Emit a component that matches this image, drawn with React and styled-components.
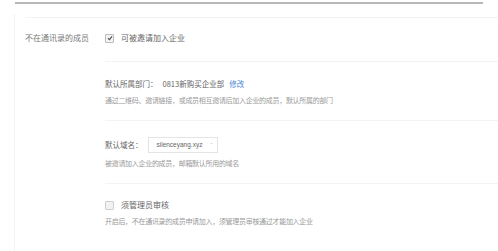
import styled, { createGlobalStyle } from "styled-components";

const GlobalStyle = createGlobalStyle`
  body {
    margin: 0;
    background: #fff;
    font-family: "Noto Sans CJK SC", "Noto Sans", sans-serif;
    color: #666;
  }
`;

const TopRule = styled.div`
  margin: 2px 15px 0 15px;
  height: 2px;
  background: #b8b8b8;
`;

const Frame = styled.div`
  margin: 10px 0 0 14px;
  padding-top: 3px;
  border-left: 1px solid #f1f1f1;
  height: 236px;
`;

const Section = styled.div`
  margin-left: 10px;
  border-top: 1px solid #f3f3f3;
  display: grid;
  grid-template-columns: 80px 1fr;
`;

const Label = styled.div`
  font-size: 8px;
  line-height: 12px;
  color: #777;
  padding-top: 14px;
`;

const Options = styled.div`
  display: flex;
  flex-direction: column;
`;

const Block = styled.div`
  padding: ${(p) => p.$pad || "14px 0"};
  border-bottom: ${(p) => (p.$last ? "none" : "1px solid #f3f3f3")};
`;

const Line = styled.div`
  display: flex;
  align-items: center;
  gap: 3px;
  font-size: ${(p) => p.$size || "8px"};
  line-height: 12px;
  color: #666;
  white-space: nowrap;
`;

const Desc = styled.div`
  font-size: 7px;
  line-height: 10px;
  color: #999;
  margin-top: 5px;
  white-space: nowrap;
  letter-spacing: -0.3px;
`;

const Box = styled.span`
  width: 7px;
  height: 7px;
  border: 1px solid ${(p) => (p.$checked ? "#bbb" : "#cfcfcf")};
  border-radius: 1px;
  background: ${(p) => (p.$checked ? "#f4f4f4" : "#f2f2f2")};
  display: inline-flex;
  align-items: center;
  justify-content: center;
  margin-right: 4px;
  flex: none;
`;

const Link = styled.span`
  color: #4a84d6;
  margin-left: 2px;
`;

const Value = styled.span`
  margin-left: 2px;
`;

const Select = styled.div`
  display: inline-flex;
  align-items: center;
  justify-content: space-between;
  width: 70px;
  height: 16px;
  box-sizing: border-box;
  border: 1px solid #e4e4e4;
  padding: 0 4px 0 8px;
  font-family: "Liberation Sans", Arial, sans-serif;
  font-size: 6.5px;
  color: #666;
  margin-left: 2px;
`;

const Caret = styled.span`
  color: #bbb;
  font-size: 6px;
`;

const Check = () => (
  <svg width="6" height="6" viewBox="0 0 6 6">
    <path d="M1 3.2 L2.5 4.6 L5 1.4" stroke="#555" strokeWidth="1.2" fill="none" />
  </svg>
);

export default function App() {
  return (
    <>
      <GlobalStyle />
      <TopRule />
      <Frame>
        <Section>
          <Label>不在通讯录的成员</Label>
          <Options>
            <Block $pad="14px 0 17px">
              <Line>
                <Box $checked>
                  <Check />
                </Box>
                可被邀请加入企业
              </Line>
            </Block>
            <Block $pad="16px 0 15px">
              <Line $size="7.5px">
                默认所属部门：<Value>0813新购买企业部</Value>
                <Link>修改</Link>
              </Line>
              <Desc>通过二维码、邀请链接，或成员相互邀请后加入企业的成员，默认所属的部门</Desc>
            </Block>
            <Block $pad="16px 0 15px">
              <Line $size="7.5px">
                默认域名：
                <Select>
                  silenceyang.xyz
                  <Caret>ˇ</Caret>
                </Select>
              </Line>
              <Desc>被邀请加入企业的成员，邮箱默认所用的域名</Desc>
            </Block>
            <Block $pad="15px 0" $last>
              <Line>
                <Box />
                须管理员审核
              </Line>
              <Desc>开启后，不在通讯录的成员申请加入，须管理员审核通过才能加入企业</Desc>
            </Block>
          </Options>
        </Section>
      </Frame>
    </>
  );
}
